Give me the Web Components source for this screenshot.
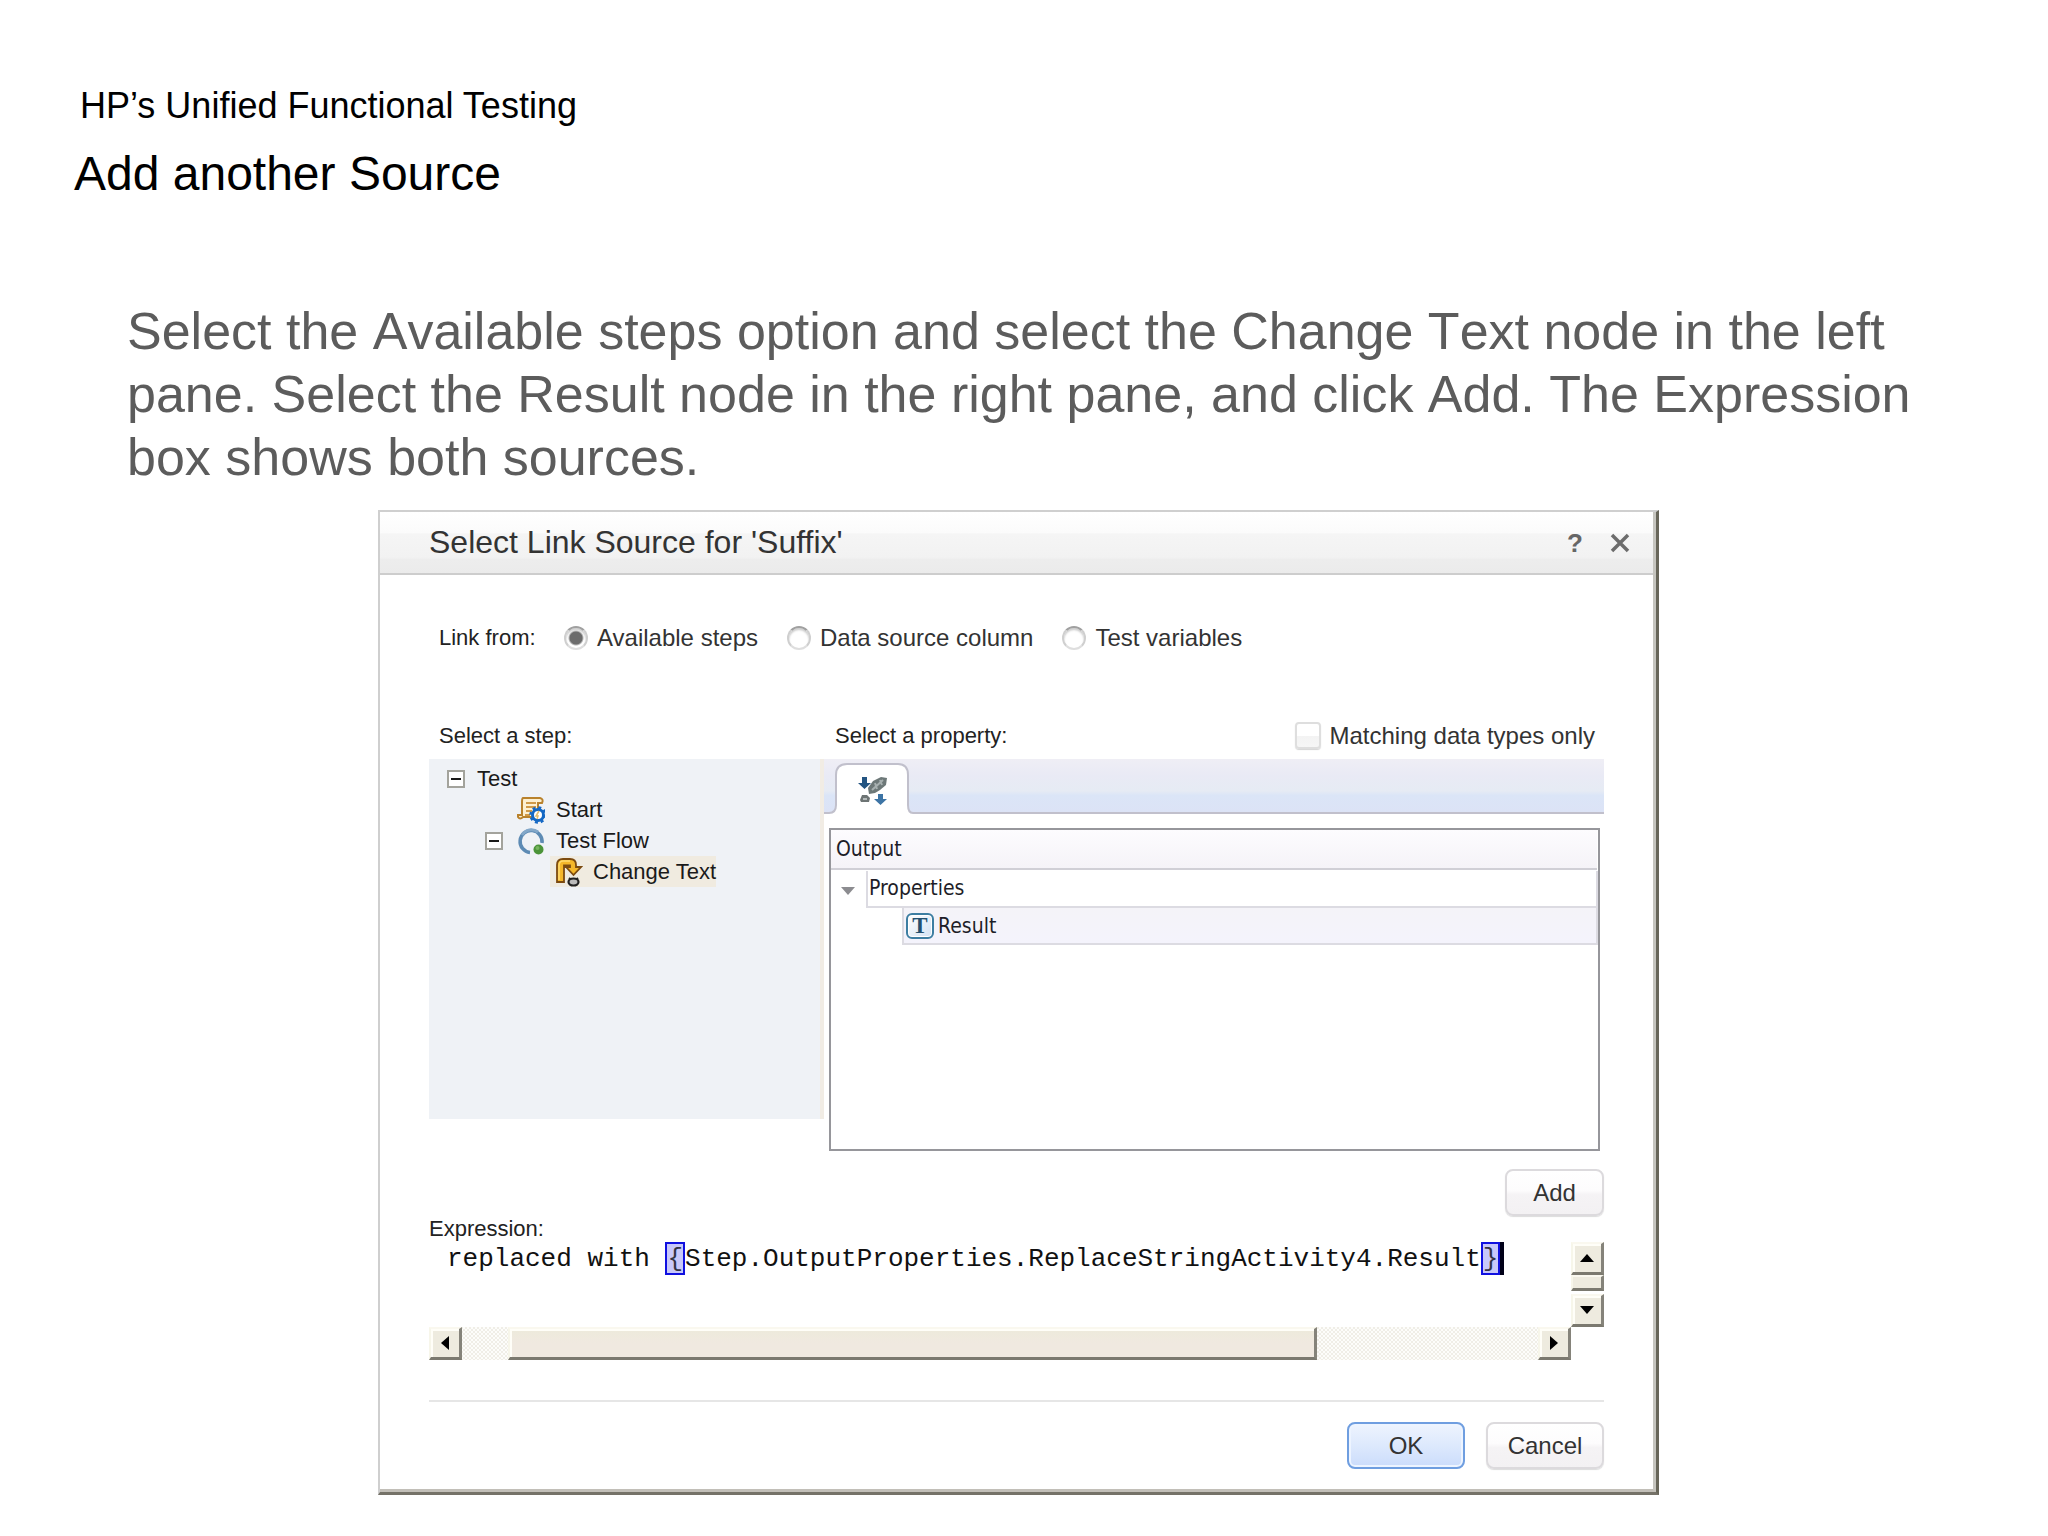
<!DOCTYPE html>
<html lang="en">
<head>
<meta charset="utf-8">
<title>Add another Source</title>
<style>
  body { margin: 0; background: #fff; font-family: "Liberation Sans", Arial, sans-serif; }
</style>
</head>
<body>
<slide-page>
  <span slot="kicker">HP’s Unified Functional Testing</span>
  <span slot="title">Add another Source</span>
  <span slot="lead">Select the Available steps option and select the Change Text node in the left pane. Select the Result node in the right pane, and click Add. The Expression box shows both sources.</span>
  <link-dialog>
    <span slot="title">Select Link Source for 'Suffix'</span>
    <source-picker></source-picker>
    <source-panes></source-panes>
    <expression-editor></expression-editor>
    <push-button slot="actions" class="wide" tone="primary">OK</push-button>
    <push-button slot="actions" class="wide">Cancel</push-button>
  </link-dialog>
</slide-page>

<script>
function define(name, html) {
  const template = document.createElement('template');
  template.innerHTML = html;
  customElements.define(name, class extends HTMLElement {
    constructor() {
      super();
      this.attachShadow({ mode: 'open' }).append(template.content.cloneNode(true));
    }
  });
}

define('slide-page', `
<style>
  :host { display: block; padding: 85px 0 40px; }
  p, h1 { margin: 0; font-weight: 400; color: #000; }
  .kicker { font-size: 36px; line-height: 42px; padding-left: 80px; }
  h1 { font-size: 48px; line-height: 56px; padding-left: 74px; margin-top: 19px; }
  .lead { font-size: 52px; line-height: 63px; font-kerning: none; color: #5c5c5c; padding: 0 110px 0 127px; margin-top: 98px; }
  .stage { margin: 21px 389px 0 378px; }
</style>
<p class="kicker"><slot name="kicker"></slot></p>
<h1><slot name="title"></slot></h1>
<p class="lead"><slot name="lead"></slot></p>
<div class="stage"><slot></slot></div>`);

define('link-dialog', `
<style>
  :host { display: block; border: 2px solid #cfcfcf; border-right: 3px solid #68665a; border-bottom: 3px solid #757268; }
  .frame { border-right: 3px solid #c6c5bf; border-bottom: 3px solid #c2bfb8; background: #fff; }
  header { display: flex; align-items: center; height: 61px; padding: 0 22px 0 49px; border-bottom: 2px solid #cdcdcd;
    background: linear-gradient(#fff 0, #fbfbfb 34%, #f5f5f5 36%, #f2f2f2 74%, #ededed 78%, #ebebeb 100%); }
  h2 { flex: 1; margin: 0; font-size: 32px; font-weight: 400; color: #333; }
  header button { border: 0; background: none; padding: 0; color: #666; font: bold 26px/26px "Liberation Sans", sans-serif; }
  header button + button { margin-left: 26px; }
  svg { display: block; }
  .body { padding: 51px 49px 0; }
  footer { display: flex; justify-content: flex-end; gap: 21px; margin: 40px 49px 0; padding: 20px 0; border-top: 2px solid #e6e6e6; }
</style>
<div class="frame" role="dialog">
  <header>
    <h2><slot name="title"></slot></h2>
    <button aria-label="Help">?</button>
    <button aria-label="Close"><svg width="22" height="20" viewBox="0 0 22 20"><path d="M3 2L19 18M19 2L3 18" stroke="#6c6c6c" stroke-width="3.5"/></svg></button>
  </header>
  <div class="body"><slot></slot></div>
  <footer><slot name="actions"></slot></footer>
</div>`);

define('push-button', `
<style>
  :host { display: block; }
  button { display: block; box-sizing: border-box; width: 99px; height: 47px; padding: 0; border: 2px solid #dcdadd; border-radius: 8px;
    background: linear-gradient(#fff, #fdfcfd 45%, #f5f3f5 55%, #f3f1f3); color: #333;
    font: 24px "Liberation Sans", Arial, sans-serif; box-shadow: 0 1px 1px #dcdcdc; }
  :host(.wide) button { width: 118px; }
  :host([tone="primary"]) button { border-color: #6f9ee0; background: linear-gradient(#eef4fe, #dde9fd 50%, #cbdcfb); box-shadow: inset 0 0 0 2px #edf4ff; }
</style>
<button><slot></slot></button>`);

define('source-picker', `
<style>
  :host { display: flex; align-items: center; height: 24px; padding-left: 10px; }
  .name { font-size: 22px; line-height: 24px; color: #222; width: 125px; }
  label { display: flex; align-items: center; gap: 9px; margin-right: 29px; font-size: 24px; line-height: 24px; color: #333; white-space: nowrap; }
  input { appearance: none; margin: 0; width: 24px; height: 24px; border-radius: 50%; border: 2px solid; border-color: #a0a0a0 #cfcfcf #dedede; background: #fff; box-shadow: inset 0 2px 2px #ccc; }
  input:checked { background: radial-gradient(circle, #6c6c6c 0 6px, #fff 8px); }
</style>
<span class="name">Link from:</span>
<label><input type="radio" name="from" checked>Available steps</label>
<label><input type="radio" name="from">Data source column</label>
<label><input type="radio" name="from">Test variables</label>`);

define('source-panes', `
<style>
  :host { display: block; margin-top: 72px; }
  .heads, .panes { display: flex; align-items: flex-start; }
  .heads { align-items: center; height: 27px; margin-bottom: 10px; font-size: 22px; line-height: 27px; color: #222; }
  .left { flex: none; width: 395px; }
  .heads .left { box-sizing: border-box; padding-left: 10px; }
  .right { flex: 1; min-width: 0; }
  .heads .right { padding-left: 11px; }
  label { display: flex; align-items: center; gap: 9px; padding-right: 9px; font-size: 24px; color: #333; }
  input { appearance: none; margin: 0; width: 26px; height: 27px; border: 2px solid #dedede; border-radius: 4px; background: linear-gradient(#fff 50%, #f3f3f3 52%, #f6f6f6); box-shadow: 0 1px 1px #d4d4d4; }
  .add { display: flex; justify-content: flex-end; margin-top: 18px; }
</style>
<div class="heads">
  <span class="left">Select a step:</span>
  <span class="right">Select a property:</span>
  <label><input type="checkbox">Matching data types only</label>
</div>
<div class="panes">
  <step-tree class="left"></step-tree>
  <property-pane class="right"></property-pane>
</div>
<div class="add"><push-button>Add</push-button></div>`);

define('step-tree', `
<style>
  :host { display: block; box-sizing: border-box; height: 360px; padding: 4px 0 0 18px; background: #eff2f6; border-right: 4px solid #f1ece4; }
  .row { display: flex; align-items: center; height: 31px; font-size: 22px; color: #1a1a1a; }
  .toggle { box-sizing: border-box; display: block; width: 18px; height: 18px; padding: 0; border: 2px solid #a3a39c; border-radius: 0; background: linear-gradient(#1a1a1a, #1a1a1a) center / 10px 2px no-repeat #fff; }
  .row > span { margin-left: 12px; }
  svg { display: block; flex: none; width: 28px; height: 30px; }
  .l1 { padding-left: 70px; }
  .flow { padding-left: 38px; }
  .flow svg { margin-left: 14px; }
  .l1 > span, .flow > span { margin-left: 11px; }
  .l2 { padding-left: 103px; }
  .l2 > div { display: flex; align-items: center; height: 31px; padding-left: 5px; background: #f0ebe0; }
  .l2 span { margin-left: 10px; }
</style>
<div class="row"><button class="toggle" aria-label="Collapse Test"></button><span>Test</span></div>
<div class="row l1">
  <svg viewBox="0 0 28 30">
    <path d="M6 3H23Q27 4 25 8H21V22H6Q3 25 1 22V20H5V7Q5 3 6 3Z" fill="#fdf0d0" stroke="#b9822c" stroke-width="2"/>
    <path d="M9 8H19M9 12H19M9 16H15M8 20H13" stroke="#d09a48" stroke-width="2"/>
    <circle cx="21" cy="20" r="5.500" fill="#fff" stroke="#1468c4" stroke-width="3"/>
    <circle cx="21" cy="20" r="7.500" fill="none" stroke="#1468c4" stroke-width="2.500" stroke-dasharray="3 2.900"/>
    <path d="M22 16L19 21H21L20 24" fill="none" stroke="#e0bd70" stroke-width="1.500"/>
  </svg><span>Start</span></div>
<div class="row flow"><button class="toggle" aria-label="Collapse Test Flow"></button>
  <svg viewBox="0 0 28 30">
    <path d="M13 26.500A11 11 0 1 1 25 17" fill="none" stroke="#5d8bb4" stroke-width="3.500"/>
    <path d="M5 9A11 11 0 0 1 21 6" fill="none" stroke="#83a8c9" stroke-width="3"/>
    <circle cx="21.500" cy="23.500" r="5" fill="#4b9439"/><circle cx="20.500" cy="22" r="2" fill="#75b45d"/>
  </svg><span>Test Flow</span></div>
<div class="row l2"><div>
  <svg viewBox="0 0 28 30">
    <path d="M2 25V8Q2 2 8 2H15Q21 2 21 8V10H26L18.500 18L11 10H15V8.500H9V25Z" fill="#f5b72a" stroke="#7c4b10" stroke-width="1.800"/>
    <path d="M4 23V9Q4 4 8 4H15" fill="none" stroke="#ffdc70" stroke-width="1.500"/>
    <ellipse cx="18.500" cy="25" rx="5" ry="3.500" fill="#bbb" stroke="#222" stroke-width="2.200"/>
    <path d="M14 21L16 22.500M23 21L21 22.500" stroke="#222" stroke-width="2"/>
  </svg><span>Change Text</span></div></div>`);

define('property-pane', `
<style>
  :host { display: block; }
  .strip { display: flex; align-items: flex-end; height: 55px; background: linear-gradient(#efeef5, #e9eaf5 30%, #e6ebf4 58%, #dbe5f7 66%, #dce3f6 96%); }
  .strip::before { content: ""; width: 5px; }
  .strip::before, .strip::after { box-sizing: border-box; height: 55px; border-bottom: 2px solid #c1c0cc; }
  .strip::after { content: ""; flex: 1; }
  .tab { display: block; padding: 0; border: 0; background: none; height: 51px; }
  .tab svg { display: block; }
  .grid { box-sizing: border-box; height: 323px; margin: 14px 4px 0 5px; border: 2px solid #96969b; background: #fff;
    font: 21px "DejaVu Sans Condensed", "DejaVu Sans", sans-serif; color: #1e1e28; }
  .head { display: flex; align-items: center; height: 38px; padding-left: 5px; margin-right: 1px; background: linear-gradient(#fdfcfe, #f5f3f8); border-bottom: 2px solid #d0cfd6; }
  .group { display: flex; align-items: center; height: 38px; }
  .group button { display: block; flex: none; width: 35px; height: 38px; padding: 4px 0 0 9px; border: 0; background: none; }
  .group button svg { display: block; }
  .cell { flex: 1; display: flex; align-items: center; height: 35px; border: solid #dcdbe2; border-width: 0 2px 2px; padding-left: 1px; }
  .leaf { display: flex; align-items: center; box-sizing: border-box; height: 37px; margin-left: 71px; padding-left: 2px; background: linear-gradient(#f4f3f8, #f4f3fc); border: solid #dcdbe2; border-width: 0 2px 2px; }
  .t { display: flex; align-items: center; justify-content: center; box-sizing: border-box; width: 28px; height: 26px; margin-right: 4px; border: 2px solid #3d7ea2; border-radius: 6px; background: linear-gradient(135deg, #fff, #d2e2f3); box-shadow: inset 0 0 0 1px #fff; color: #23506f; font: bold 23px/22px "Liberation Serif", serif; }
</style>
<div class="strip"><button class="tab" aria-label="Output properties"><svg width="84" height="51" viewBox="0 0 84 51">
  <path d="M0 51V50Q7 50 7 42V12Q7 1 18 1H69Q79 1 79 12V42Q79 50 84 50V51Z" fill="#fff"/>
  <path d="M0 50Q7 50 7 42V12Q7 1 18 1H69Q79 1 79 12V42Q79 50 84 50" fill="none" stroke="#c1c0cc" stroke-width="2"/>
  <path d="M33 14H38V20H42L35.500 26L29 20H33Z" fill="#245582"/>
  <path d="M49 31H54V36H58L51.500 42L45 36H49Z" fill="#3d74a5"/>
  <path d="M40 31L39 25L44 18L52 14L58 15L57 22L51 27L46 30Z" fill="#6d7878"/>
  <path d="M43 27L54 17M46 20L48 26M51 17L53 22" stroke="#a7b0b0" stroke-width="2"/>
  <path d="M31 37L33 32H38L41 35L40 39H32Z" fill="#6d7474"/><path d="M34 36H38" stroke="#b4baba" stroke-width="2"/>
</svg></button></div>
<div class="grid">
  <div class="head">Output</div>
  <div class="group"><button aria-label="Collapse Properties"><svg width="16" height="8"><path d="M1 0H15L8 8Z" fill="#8c8c90"/></svg></button><div class="cell">Properties</div></div>
  <div class="leaf"><span class="t">T</span>Result</div>
</div>`);

define('expression-editor', `
<style>
  :host { display: grid; grid-template-columns: 1fr 33px; }
  .name { grid-column: 1 / 3; font-size: 22px; line-height: 26px; color: #222; }
  .text { display: flex; align-items: flex-start; height: 85px; padding-left: 18px; outline: 0; overflow: hidden; white-space: pre; font: 26px/34px "Liberation Mono", monospace; color: #111; }
  .brace { box-sizing: border-box; height: 33px; line-height: 30px; border: 2px solid #1010e0; background: #c8c8fa; color: #334; }
  .caret { width: 4px; height: 33px; background: #000018; }
  .v, .h { display: flex; }
  .v { flex-direction: column; }
  .h { background: repeating-conic-gradient(#fdfdfb 0 25%, #f0eee7 0 50%) 0 0 / 4px 4px; }
  button, .thumb { box-sizing: border-box; border: solid; border-width: 2px 3px 3px 2px; border-color: #faf8ef #85837a #7b796f #f7f6ea; background: #eeebdf; }
  button { display: flex; align-items: center; justify-content: center; flex: none; width: 33px; height: 33px; padding: 0; box-shadow: inset 2px 2px #fffef8; }
  .v .thumb { height: 16px; margin-bottom: 3px; }
  .h .thumb { flex: 806; background: linear-gradient(#edeadb, #f0e9e0 50%); box-shadow: inset 2px 2px #fffef8; }
  .gap1 { flex: 46; }
  .gap2 { flex: 222; }
</style>
<span class="name" id="n">Expression:</span>
<div class="text" role="textbox" aria-labelledby="n" contenteditable="true" spellcheck="false"><span>replaced with </span><span class="brace">{</span><span>Step.OutputProperties.ReplaceStringActivity4.Result</span><span class="brace">}</span><span class="caret"></span></div>
<div class="v">
  <button aria-label="Scroll up"><svg width="14" height="8"><path d="M0 8L7 0L14 8Z"/></svg></button>
  <div class="thumb"></div>
  <button aria-label="Scroll down"><svg width="14" height="8"><path d="M0 0L7 8L14 0Z"/></svg></button>
</div>
<div class="h">
  <button aria-label="Scroll left"><svg width="8" height="14"><path d="M8 0L0 7L8 14Z"/></svg></button>
  <div class="gap1"></div><div class="thumb"></div><div class="gap2"></div>
  <button aria-label="Scroll right"><svg width="8" height="14"><path d="M0 0L8 7L0 14Z"/></svg></button>
</div>`);
</script>
</body>
</html>
